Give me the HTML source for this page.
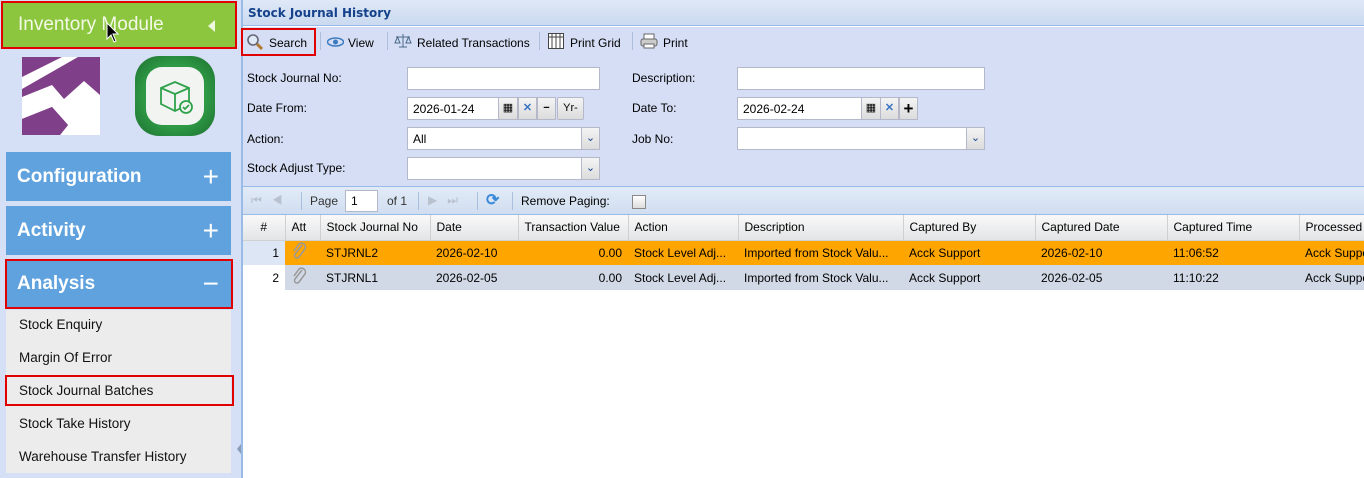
<!DOCTYPE html>
<html><head><style>
*{box-sizing:border-box;margin:0;padding:0}
body{width:1364px;height:478px;overflow:hidden;background:#fff;font-family:"Liberation Sans",Tahoma,sans-serif;font-size:12px;color:#000;position:relative}
.abs{position:absolute}
#side{left:0;top:0;width:237px;height:478px;background:#d5dff5}
#split{left:237px;top:0;width:5px;height:478px;background:#d5dff5;border-right:1px solid #99bbe8}
.sec{position:absolute;left:6px;width:225px;height:49px;background:#5fa2dd;color:#fff;font-weight:bold;font-size:19px;line-height:49px;padding-left:11px;font-family:"Liberation Sans",sans-serif}
.sec span{position:absolute;right:12px;top:0;font-size:28px;font-weight:normal}
.mi{position:absolute;left:19px;font-size:13.5px;font-family:"Liberation Sans",sans-serif;color:#111}
.lbl{position:absolute;font-size:12px;margin-top:1px}
.inp{position:absolute;background:#fff;border:1px solid #b5b8c8;height:23px;font-size:12px;line-height:22px;padding-left:5px}
.trig{position:absolute;top:-1px;width:19px;height:23px;background:linear-gradient(#f4f4f4,#dcdcdc);border:1px solid #b5b8c8;text-align:center;line-height:21px;font-size:11px}
th,td{font-weight:normal;text-align:left;padding:0 6px;white-space:nowrap;overflow:hidden}
th{height:25px;background:linear-gradient(#f9f9f9,#e3e4e6);border-right:1px solid #d0d0d0;border-bottom:1px solid #d0d0d0;font-size:12px}
td{height:25px;font-size:12px}
</style></head><body>
<div id="side" class="abs"></div>
<div id="split" class="abs"><div class="abs" style="left:0;top:444px;width:0;height:0;border-top:5px solid transparent;border-bottom:5px solid transparent;border-right:4px solid #8a9bb8"></div></div>
<div class="abs" style="left:1px;top:1px;width:236px;height:48px;background:#8cc63f;border:2px solid #e00000;color:#f3f9e6;font-size:19px;line-height:44px;padding-left:15px;font-family:'Liberation Sans',sans-serif">Inventory Module<span style="position:absolute;right:20px;top:17px;width:0;height:0;border-top:6px solid transparent;border-bottom:6px solid transparent;border-right:7px solid #eef7df"></span></div>
<svg class="abs" style="left:22px;top:57px" width="78" height="78"><rect width="78" height="78" fill="#7f3f89"/><polygon points="0,20 40,0 56,0 0,32" fill="#fff"/><polygon points="0,40 30,28 42,42 62,24 78,38 78,78 38,78 46,68 30,50 0,62" fill="#fff"/><polygon points="0,62 30,50 46,68 38,78 0,78" fill="#7f3f89"/></svg>
<div class="abs" style="left:135px;top:56px;width:80px;height:80px;border-radius:24px;background:radial-gradient(#2e9a46 55%,#1c6e2e);"></div>
<div class="abs" style="left:146px;top:67px;width:58px;height:58px;border-radius:16px;background:#f2f4f2;"></div>
<svg class="abs" style="left:157px;top:78px" width="38" height="38" fill="none" stroke="#2fa24a" stroke-width="1.8"><polygon points="4,10 18,4 32,10 32,26 18,33 4,26"/><polyline points="4,10 18,16 32,10"/><line x1="18" y1="16" x2="18" y2="33"/><circle cx="29" cy="29" r="6" fill="#f2f4f2"/><polyline points="26,29 28,31 32,27"/></svg>
<div class="sec" style="top:152px">Configuration<span>+</span></div>
<div class="sec" style="top:206px">Activity<span>+</span></div>
<div class="sec" style="top:259px;height:50px;border:2px solid #e00000;left:5px;width:228px;line-height:46px;padding-left:10px">Analysis<span>−</span></div>
<div class="abs" style="left:6px;top:310px;width:225px;height:163px;background:#ececec"></div>
<div class="mi" style="top:317px">Stock Enquiry</div>
<div class="mi" style="top:350px">Margin Of Error</div>
<div class="abs" style="left:5px;top:375px;width:229px;height:31px;border:2px solid #e00000"></div>
<div class="mi" style="top:383px">Stock Journal Batches</div>
<div class="mi" style="top:416px">Stock Take History</div>
<div class="mi" style="top:449px">Warehouse Transfer History</div>

<div class="abs" style="left:242px;top:0;width:1122px;height:478px;border-left:1px solid #99bbe8;background:#fff"></div>
<div class="abs" style="left:243px;top:0;width:1121px;height:26px;background:linear-gradient(#dfe8f6,#cbdaf0);border-bottom:1px solid #99bbe8;color:#15428b;font-weight:bold;font-size:12px;line-height:26px;padding-left:5px;font-family:Tahoma,'DejaVu Sans',sans-serif">Stock Journal History</div>
<div class="abs" style="left:243px;top:27px;width:1121px;height:161px;background:#d5def5"></div>
<div class="abs" style="left:241px;top:28px;width:75px;height:28px;border:2px solid #e00000"></div>
<svg class="abs" style="left:246px;top:33px" width="18" height="18"><circle cx="7" cy="7" r="5" fill="#dfeaf6" stroke="#667" stroke-width="1.6"/><line x1="11" y1="11" x2="16" y2="16" stroke="#b07a30" stroke-width="3"/></svg>
<div class="abs" style="left:269px;top:36px">Search</div>
<div class="abs" style="left:320px;top:32px;width:1px;height:18px;background:#a9bfdc"></div>
<svg class="abs" style="left:327px;top:37px" width="17" height="10"><ellipse cx="8.5" cy="5" rx="8" ry="4" fill="none" stroke="#3b7bbf" stroke-width="1.5"/><circle cx="8.5" cy="5" r="2.5" fill="#3b7bbf"/></svg>
<div class="abs" style="left:348px;top:36px">View</div>
<div class="abs" style="left:387px;top:32px;width:1px;height:18px;background:#a9bfdc"></div>
<svg class="abs" style="left:394px;top:33px" width="18" height="16" stroke="#4a6a8a" fill="none"><line x1="9" y1="1" x2="9" y2="14"/><line x1="2" y1="4" x2="16" y2="4"/><path d="M1,10 L3.5,4 L6,10 Z M12,10 L14.5,4 L17,10 Z"/><line x1="5" y1="14" x2="13" y2="14"/></svg>
<div class="abs" style="left:417px;top:36px">Related Transactions</div>
<div class="abs" style="left:539px;top:32px;width:1px;height:18px;background:#a9bfdc"></div>
<svg class="abs" style="left:548px;top:33px" width="16" height="16"><rect x="0.5" y="0.5" width="15" height="15" fill="#fff" stroke="#444"/><path d="M0,4H16M4,0V16M8,0V16M12,0V16" stroke="#444"/></svg>
<div class="abs" style="left:570px;top:36px">Print Grid</div>
<div class="abs" style="left:632px;top:32px;width:1px;height:18px;background:#a9bfdc"></div>
<svg class="abs" style="left:640px;top:33px" width="18" height="16"><rect x="4" y="1" width="10" height="5" fill="#fff" stroke="#666"/><rect x="1" y="6" width="16" height="7" rx="2" fill="#ccc" stroke="#666"/><rect x="4" y="11" width="10" height="4" fill="#fff" stroke="#666"/></svg>
<div class="abs" style="left:663px;top:36px">Print</div>

<div class="lbl" style="left:247px;top:70px">Stock Journal No:</div>
<div class="inp" style="left:407px;top:67px;width:193px"></div>
<div class="lbl" style="left:247px;top:100px">Date From:</div>
<div class="inp" style="left:407px;top:97px;width:92px">2026-01-24</div>
<div class="trig" style="left:498px;top:97px;width:20px">▦</div>
<div class="trig" style="left:518px;top:97px;color:#3a75c4;font-weight:bold">✕</div>
<div class="trig" style="left:537px;top:97px;font-weight:bold">−</div>
<div class="trig" style="left:557px;top:97px;width:27px;border-radius:2px">Yr-</div>
<div class="lbl" style="left:247px;top:131px">Action:</div>
<div class="inp" style="left:407px;top:127px;width:193px">All<div class="trig" style="right:-1px;color:#15428b">⌄</div></div>
<div class="lbl" style="left:247px;top:160px">Stock Adjust Type:</div>
<div class="inp" style="left:407px;top:157px;width:193px"><div class="trig" style="right:-1px;color:#15428b">⌄</div></div>
<div class="lbl" style="left:632px;top:70px">Description:</div>
<div class="inp" style="left:737px;top:67px;width:248px"></div>
<div class="lbl" style="left:632px;top:100px">Date To:</div>
<div class="inp" style="left:737px;top:97px;width:125px">2026-02-24</div>
<div class="trig" style="left:861px;top:97px;width:20px">▦</div>
<div class="trig" style="left:880px;top:97px;color:#3a75c4;font-weight:bold">✕</div>
<div class="trig" style="left:899px;top:97px;font-weight:bold;font-size:17px">+</div>
<div class="lbl" style="left:632px;top:131px">Job No:</div>
<div class="inp" style="left:737px;top:127px;width:248px"><div class="trig" style="right:-1px;color:#15428b">⌄</div></div>

<div class="abs" style="left:243px;top:186px;width:1121px;height:29px;background:linear-gradient(#e2ebf7,#d0def0);border-top:1px solid #99bbe8;border-bottom:1px solid #99bbe8"></div>
<div class="abs" style="left:251px;top:193px;color:#b8c2cf;font-size:12px">⏮&nbsp;&nbsp;&nbsp;◀</div>
<div class="abs" style="left:301px;top:192px;width:1px;height:18px;background:#a9bfdc"></div>
<div class="abs" style="left:310px;top:194px;color:#333">Page</div>
<div class="inp" style="left:345px;top:190px;width:33px;height:22px;line-height:20px">1</div>
<div class="abs" style="left:387px;top:194px;color:#333">of 1</div>
<div class="abs" style="left:418px;top:192px;width:1px;height:18px;background:#a9bfdc"></div>
<div class="abs" style="left:428px;top:193px;color:#b8c2cf">▶&nbsp;&nbsp;&nbsp;⏭</div>
<div class="abs" style="left:477px;top:192px;width:1px;height:18px;background:#a9bfdc"></div>
<div class="abs" style="left:486px;top:190px;color:#3a8ad8;font-size:16px;font-weight:bold">⟳</div>
<div class="abs" style="left:512px;top:192px;width:1px;height:18px;background:#a9bfdc"></div>
<div class="abs" style="left:521px;top:194px">Remove Paging:</div>
<div class="abs" style="left:632px;top:195px;width:14px;height:14px;border:1px solid #888;background:linear-gradient(#fff,#ddd)"></div>

<table class="abs" style="left:243px;top:215px;border-collapse:collapse;table-layout:fixed;width:1130px">
<colgroup><col style="width:42px"><col style="width:35px"><col style="width:110px"><col style="width:88px"><col style="width:110px"><col style="width:110px"><col style="width:165px"><col style="width:132px"><col style="width:132px"><col style="width:132px"><col style="width:74px"></colgroup>
<tr><th style="text-align:center">#</th><th>Att</th><th>Stock Journal No</th><th>Date</th><th>Transaction Value</th><th>Action</th><th>Description</th><th>Captured By</th><th>Captured Date</th><th>Captured Time</th><th>Processed By</th></tr>
<tr style="background:#ffa500"><td style="text-align:right;background:#dde6f4;border-bottom:1px dotted #aaa">1</td><td><svg width="16" height="18"><path d="M11,3 L4,12 a2.5,2.5 0 0 0 4,3 L14,7 a4,4 0 0 0 -6,-5 L3,9" fill="none" stroke="#999" stroke-width="1.5"/></svg></td><td>STJRNL2</td><td>2026-02-10</td><td style="text-align:right">0.00</td><td>Stock Level Adj...</td><td>Imported from Stock Valu...</td><td>Acck Support</td><td>2026-02-10</td><td>11:06:52</td><td>Acck Support</td></tr>
<tr style="background:#d1d9e6"><td style="text-align:right;background:#fff;border-top:1px solid #fff">2</td><td><svg width="16" height="18"><path d="M11,3 L4,12 a2.5,2.5 0 0 0 4,3 L14,7 a4,4 0 0 0 -6,-5 L3,9" fill="none" stroke="#999" stroke-width="1.5"/></svg></td><td>STJRNL1</td><td>2026-02-05</td><td style="text-align:right">0.00</td><td>Stock Level Adj...</td><td>Imported from Stock Valu...</td><td>Acck Support</td><td>2026-02-05</td><td>11:10:22</td><td>Acck Support</td></tr>
</table>
<svg class="abs" style="left:106px;top:22px" width="14" height="22"><path d="M1,1 L1,17 L5,13 L8,20 L10,19 L7,12 L12,12 Z" fill="#000" stroke="#fff"/></svg>
</body></html>
